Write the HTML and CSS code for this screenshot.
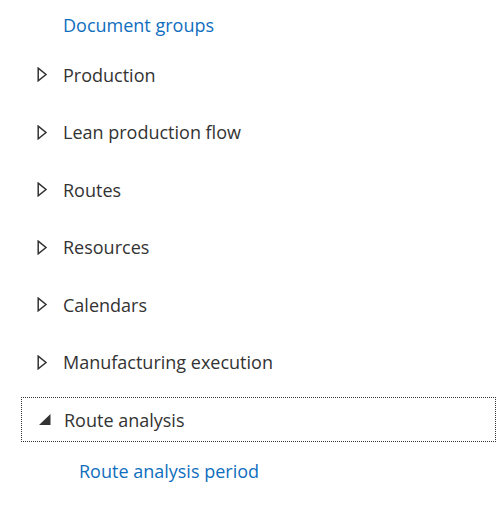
FILE: index.html
```html
<!DOCTYPE html>
<html>
<head>
<meta charset="utf-8">
<link rel="stylesheet" href="styles.css">
</head>
<body>
<div class="tree">
  <div class="link-row top"><a class="link">Document groups</a></div>
  <div class="node"><span class="exp"><svg width="11" height="15" viewBox="0 0 11 15"><path d="M1.2 1.2 L9 7.5 L1.2 13.8 Z" fill="none" stroke="#333" stroke-width="1.5"/></svg></span><span class="label">Production</span></div>
  <div class="node"><span class="exp"><svg width="11" height="15" viewBox="0 0 11 15"><path d="M1.2 1.2 L9 7.5 L1.2 13.8 Z" fill="none" stroke="#333" stroke-width="1.5"/></svg></span><span class="label">Lean production flow</span></div>
  <div class="node"><span class="exp"><svg width="11" height="15" viewBox="0 0 11 15"><path d="M1.2 1.2 L9 7.5 L1.2 13.8 Z" fill="none" stroke="#333" stroke-width="1.5"/></svg></span><span class="label">Routes</span></div>
  <div class="node"><span class="exp"><svg width="11" height="15" viewBox="0 0 11 15"><path d="M1.2 1.2 L9 7.5 L1.2 13.8 Z" fill="none" stroke="#333" stroke-width="1.5"/></svg></span><span class="label">Resources</span></div>
  <div class="node"><span class="exp"><svg width="11" height="15" viewBox="0 0 11 15"><path d="M1.2 1.2 L9 7.5 L1.2 13.8 Z" fill="none" stroke="#333" stroke-width="1.5"/></svg></span><span class="label">Calendars</span></div>
  <div class="node"><span class="exp"><svg width="11" height="15" viewBox="0 0 11 15"><path d="M1.2 1.2 L9 7.5 L1.2 13.8 Z" fill="none" stroke="#333" stroke-width="1.5"/></svg></span><span class="label">Manufacturing execution</span></div>
  <div class="node open"><div class="focus"><span class="exp"><svg width="12" height="11" viewBox="0 0 12 11"><path d="M11.5 0 L11.5 11 L0 11 Z" fill="#333"/></svg></span><span class="label">Route analysis</span></div></div>
  <div class="link-row child"><a class="link">Route analysis period</a></div>
</div>
</body>
</html>
```
FILE: styles.css
```css
html, body {
  margin: 0;
  padding: 0;
  background: #fff;
}
.tree {
  font-family: "Open Sans", "Noto Sans", sans-serif;
  font-size: 18px;
  color: #333;
  width: 499px;
}
.link-row {
  display: flex;
  align-items: center;
  padding-left: 63px;
}
.link-row.top {
  height: 42px;
  padding-top: 4px;
}
.link-row.child {
  padding-left: 79px;
  height: 44px;
}
.link {
  color: #106ebe;
}
.node {
  display: flex;
  align-items: center;
  height: 57.5px;
  padding-left: 37px;
}
.exp {
  width: 26px;
  display: flex;
  align-items: center;
}
.exp svg {
  display: block;
}
.node.open {
  padding-left: 21px;
  padding-right: 3px;
}
.focus {
  flex: 1;
  display: flex;
  align-items: center;
  height: 43px;
  border: 1px dotted #333;
  padding-left: 17px;
}
.focus .exp {
  width: 25px;
}
```
